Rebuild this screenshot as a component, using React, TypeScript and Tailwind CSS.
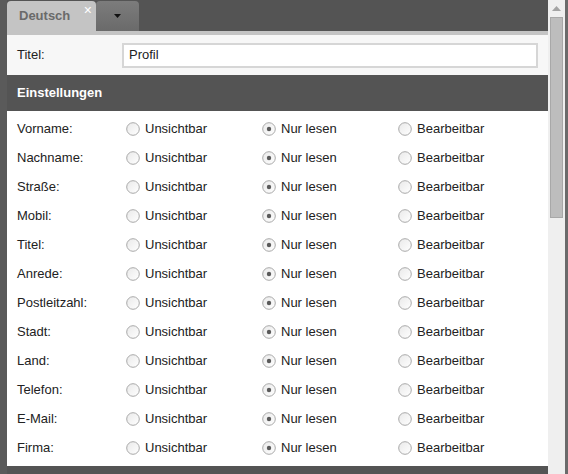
import React from "react";

const fields = [
  "Vorname:",
  "Nachname:",
  "Straße:",
  "Mobil:",
  "Titel:",
  "Anrede:",
  "Postleitzahl:",
  "Stadt:",
  "Land:",
  "Telefon:",
  "E-Mail:",
  "Firma:",
];

function Radio({ checked }: { checked?: boolean }) {
  return (
    <svg width="14" height="14" viewBox="0 0 14 14" className="shrink-0">
      <defs>
        <linearGradient id="rg" x1="0" y1="0" x2="1" y2="1">
          <stop offset="0" stopColor="#e9e9e9" />
          <stop offset="1" stopColor="#ffffff" />
        </linearGradient>
      </defs>
      <circle cx="7" cy="7" r="6.3" fill="url(#rg)" stroke="#a9a9a9" strokeWidth="1" />
      {checked && <circle cx="7" cy="7" r="2.2" fill="#5a5a5a" />}
    </svg>
  );
}

function Option({ label, checked }: { label: string; checked?: boolean }) {
  return (
    <div className="flex w-[136px] items-center gap-[5px]">
      <Radio checked={checked} />
      <span>{label}</span>
    </div>
  );
}

export default function App() {
  return (
    <div
      className="flex h-[474px] w-[568px] overflow-hidden bg-[#5a5a5a] text-[13px] text-[#222]"
      style={{ fontFamily: '"Liberation Sans", Arial, sans-serif' }}
    >
      <div className="ml-[7px] flex w-[541px] flex-col">
        {/* tab bar */}
        <div className="flex h-[31px] items-end bg-[#545454]">
          <div className="relative flex h-[30px] w-[89px] items-center rounded-t-[4px] bg-[#c4c4c4] pl-[12px] font-bold text-[#6a6a6a]">
            Deutsch
            <span className="absolute right-[4px] top-[-1px] text-[14px] font-normal text-white">×</span>
          </div>
          <div className="flex h-[30px] w-[43px] items-center justify-center rounded-t-[4px] bg-gradient-to-b from-[#7c7c7c] to-[#6a6a6a]">
            <svg width="7" height="4" viewBox="0 0 7 4">
              <path d="M0 0 H7 L3.5 4 Z" fill="#111" />
            </svg>
          </div>
        </div>
        <div className="h-[4px] bg-[#c4c4c4]" />
        {/* Titel row */}
        <div className="flex h-[40px] items-center bg-[#f7f7f7] pl-[10px] pr-[10px]">
          <span className="w-[105px]">Titel:</span>
          <div className="flex h-[25px] flex-1 items-center border-2 border-[#d6d6d6] bg-white pl-[5px]">
            Profil
          </div>
        </div>
        {/* section header */}
        <div className="flex h-[36px] items-center bg-[#545454] pl-[10px] font-bold text-white">
          Einstellungen
        </div>
        {/* rows */}
        <div className="flex flex-1 flex-col bg-white pt-[3px]">
          {fields.map((f) => (
            <div key={f} className="flex h-[29px] items-center pl-[10px]">
              <span className="w-[109px]">{f}</span>
              <Option label="Unsichtbar" />
              <Option label="Nur lesen" checked />
              <Option label="Bearbeitbar" />
            </div>
          ))}
        </div>
        <div className="h-[8px] bg-[#545454]" />
      </div>
      {/* scrollbar */}
      <div className="flex w-[17px] flex-col items-center bg-[#efefef]">
        <div className="flex h-[17px] items-center justify-center">
          <svg width="9" height="5" viewBox="0 0 9 5">
            <path d="M4.5 0 L9 5 H0 Z" fill="#a3a3a3" />
          </svg>
        </div>
        <div className="h-[201px] w-[13px] border border-[#a8a8a8] bg-[#bdbdbd]" />
      </div>
      <div className="w-[3px] bg-[#6b6b6b]" />
    </div>
  );
}
